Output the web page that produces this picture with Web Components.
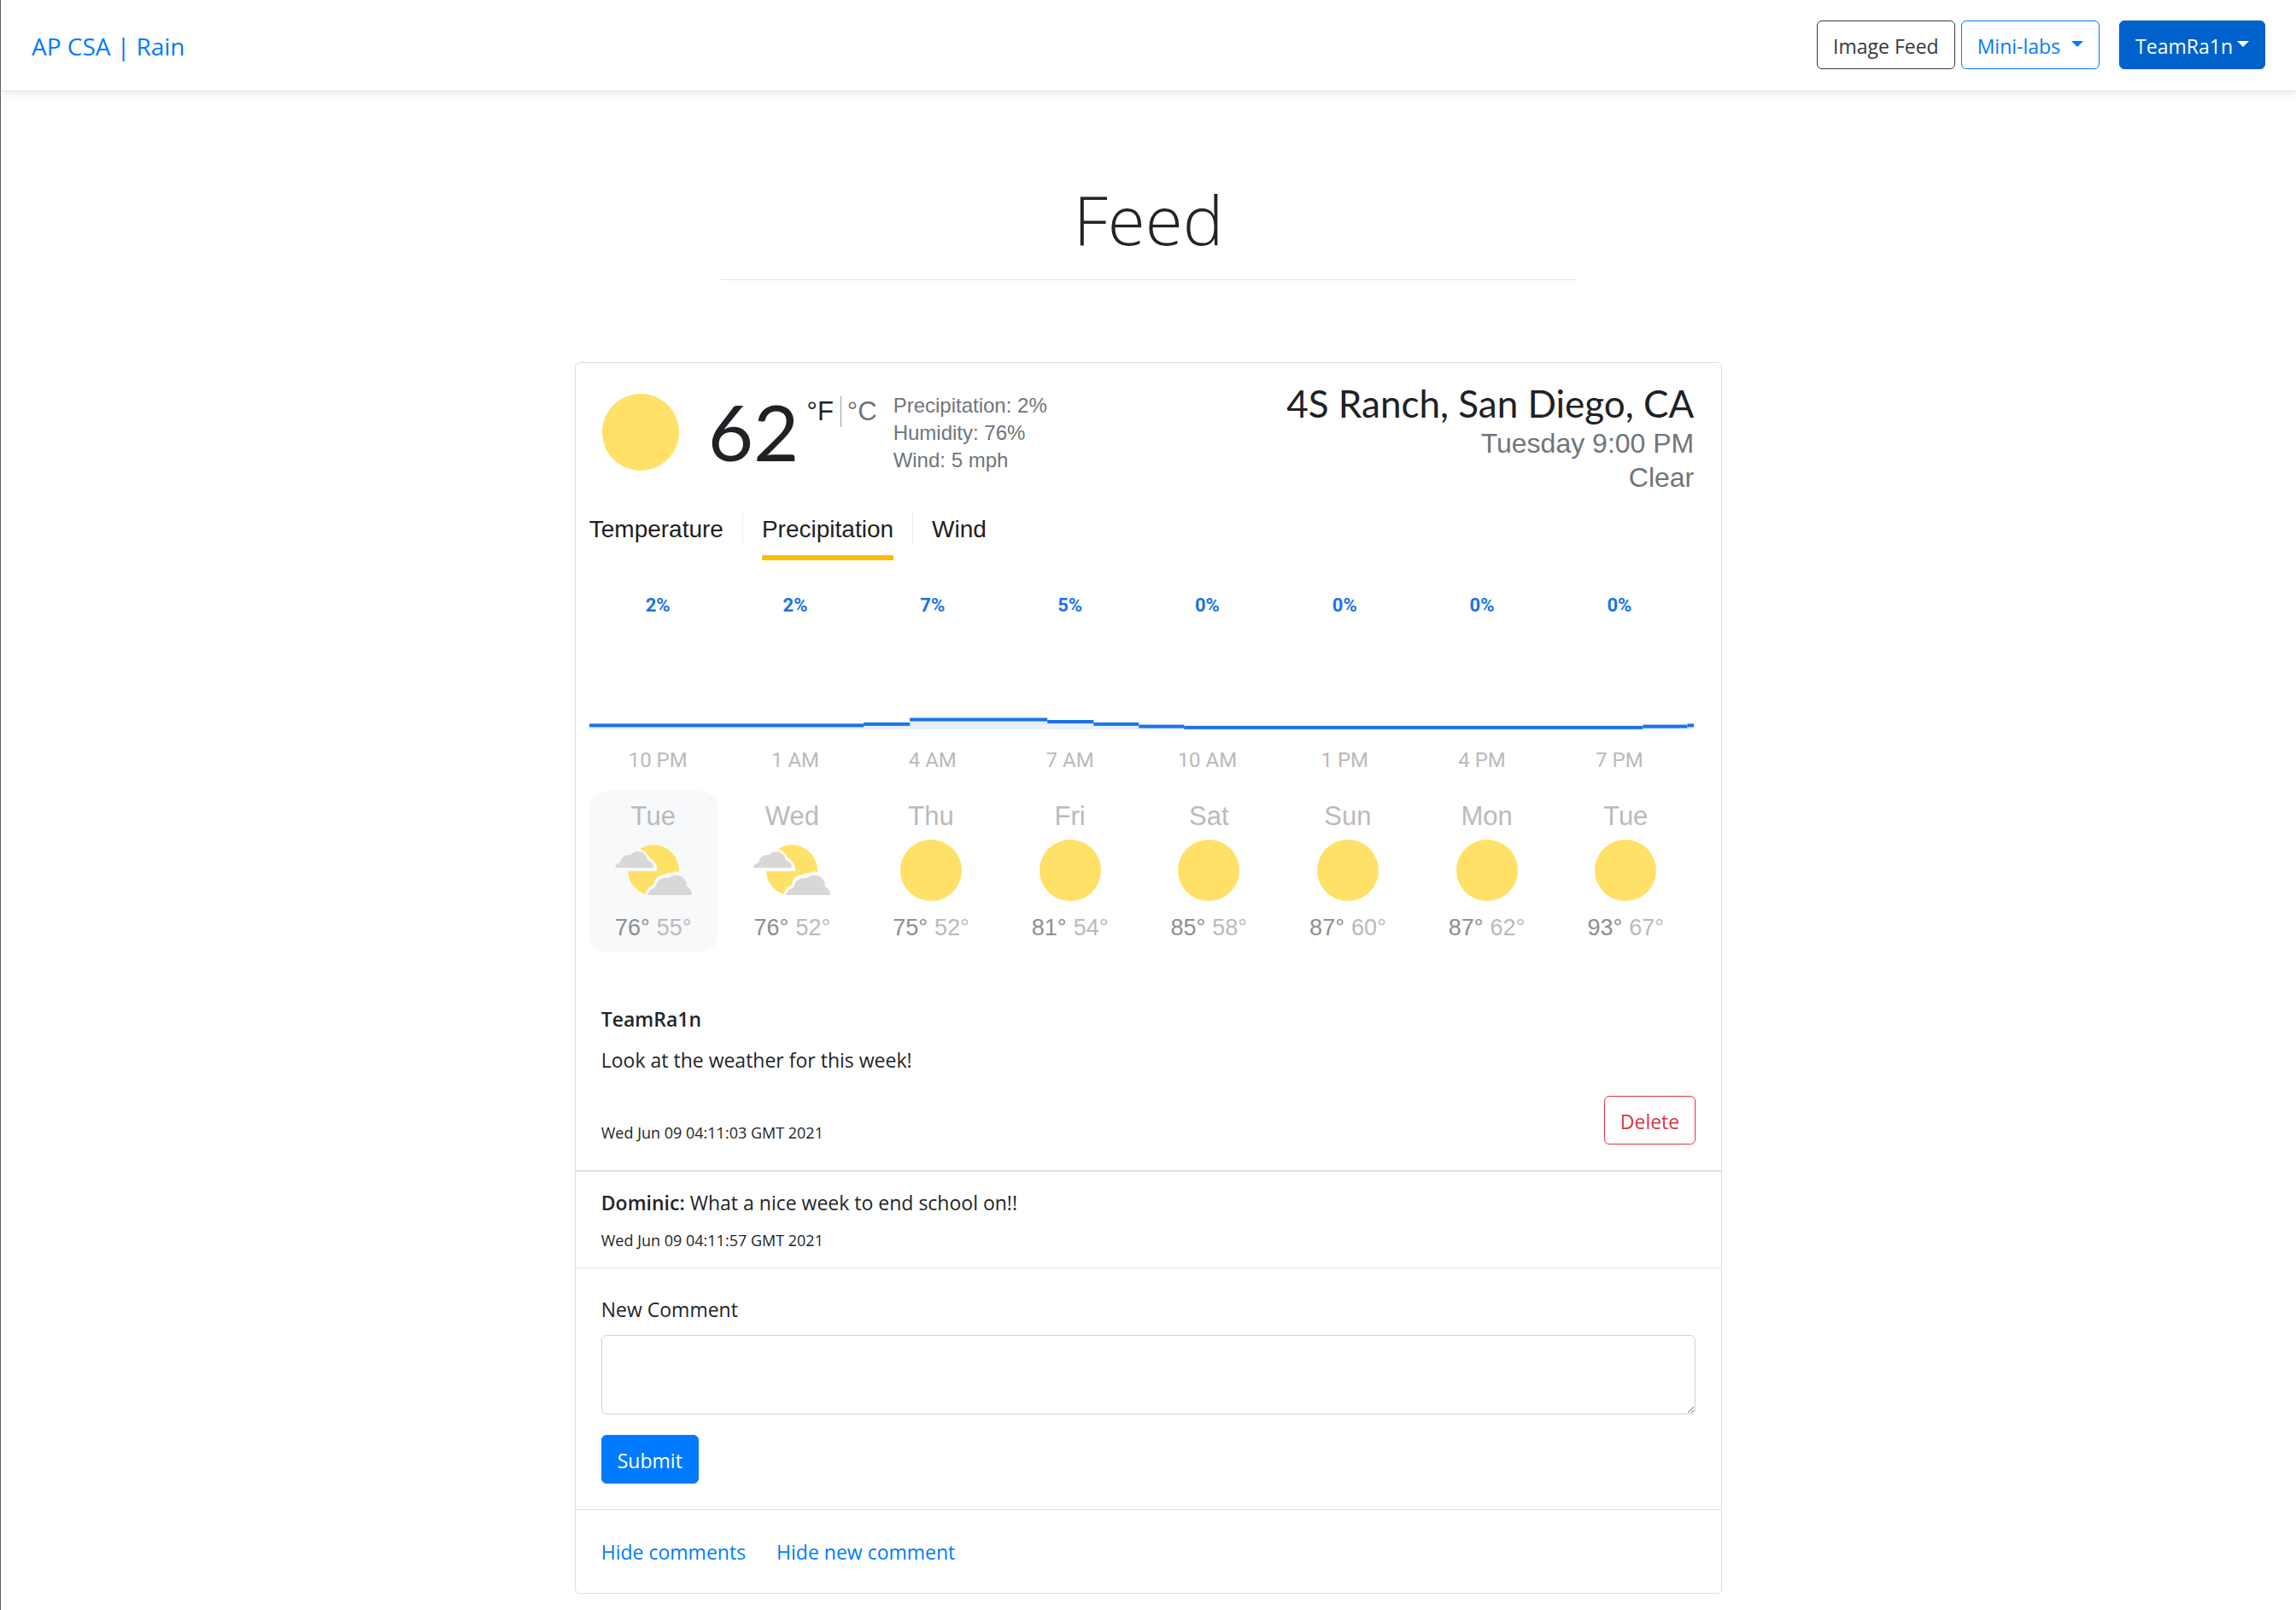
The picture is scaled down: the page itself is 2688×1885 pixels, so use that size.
<!DOCTYPE html>
<html lang="en">
<head>
<meta charset="utf-8">
<title>AP CSA | Rain</title>
<style>
  body {
    margin: 0;
    border-left: 1px solid #5f6164;
    min-height: 100vh;
    box-sizing: border-box;
    background: #fff;
    color: #212529;
    font: 400 23px/36px "Open Sans", "Noto Sans", sans-serif;
  }
  main { display: block; width: 50%; margin: 0 auto; }
</style>
</head>
<body>
<app-navbar brand="AP CSA | Rain">
  <app-button variant="dark">Image Feed</app-button>
  <app-button variant="outline" caret="wide">Mini-labs</app-button>
  <app-button variant="active" caret="tight" class="account">TeamRa1n</app-button>
</app-navbar>
<page-title>Feed</page-title>
<main>
  <post-card>
    <weather-widget slot="media"></weather-widget>
    <span slot="author">TeamRa1n</span>
    <span slot="text">Look at the weather for this week!</span>
    <span slot="date">Wed Jun 09 04:11:03 GMT 2021</span>
    <app-button slot="action" variant="danger">Delete</app-button>
    <post-comment slot="comments" author="Dominic:" date="Wed Jun 09 04:11:57 GMT 2021">What a nice week to end school on!!</post-comment>
    <comment-form slot="form"></comment-form>
    <app-link slot="links">Hide comments</app-link>
    <app-link slot="links">Hide new comment</app-link>
  </post-card>
</main>
<script>
class BaseElement extends HTMLElement {
  connectedCallback() {
    if (this.shadowRoot) return;
    this.attachShadow({ mode: 'open' }).innerHTML = this.render();
  }
}

customElements.define('app-navbar', class extends BaseElement {
  render() {
    return `<style>
      :host { display: block; }
      header { display: flex; align-items: center; justify-content: space-between; padding: 24px 36px 25px;
        border-bottom: 1px solid #dee2e6; box-shadow: 0 3px 9px rgba(0,0,0,.08); }
      a { padding-top: 2px; color: #007bff; text-decoration: none; font-size: 28px; line-height: 44px; }
      nav { display: flex; gap: 7px; }
      ::slotted(.account) { margin-left: 16px; }
    </style>
    <header><a href="#">${this.getAttribute('brand')}</a><nav><slot></slot></nav></header>`;
  }
});

customElements.define('app-button', class extends BaseElement {
  render() {
    return `<style>
      :host { display: block; }
      button { display: flex; align-items: center; height: 57px; padding: 2px 18px 0; margin: 0; box-sizing: border-box;
        font: inherit; line-height: 36px; border: 1px solid; border-radius: 6px; background: none; cursor: pointer; white-space: nowrap; }
      .dark { color: #343a40; }
      .outline { color: #007bff; }
      .danger { color: #dc3545; }
      .primary { color: #fff; background: #007bff; border-color: #007bff; }
      .active { color: #fff; background: #0062cc; border-color: #005cbf; }
      i { border: 7px solid transparent; border-top-color: currentColor; border-bottom: 0; margin-bottom: 4px; }
      .wide { margin-left: 13px; }
      .tight { margin-left: 5px; }
    </style>
    <button type="button" class="${this.getAttribute('variant')}"><slot></slot>${
      this.hasAttribute('caret') ? `<i class="${this.getAttribute('caret')}"></i>` : ''}</button>`;
  }
});

customElements.define('app-link', class extends BaseElement {
  render() {
    return `<style>:host { display: block; } a { color: #007bff; text-decoration: none; }</style><a href="#"><slot></slot></a>`;
  }
});

customElements.define('page-title', class extends BaseElement {
  render() {
    return `<style>
      :host { display: block; max-width: 1002px; margin: 98px auto 96px; border-bottom: 1px solid #e2e3e5; }
      h1 { margin: 0 0 21px; text-align: center; font-weight: 300; font-size: 80px; line-height: 101px; }
    </style><h1><slot></slot></h1>`;
  }
});

customElements.define('post-card', class extends BaseElement {
  render() {
    return `<style>
      :host { display: block; border: 1px solid #dfdfdf; border-radius: 6px; }
      .body { padding: 30px; border-bottom: 2px solid #dfdfdf; }
      h2 { margin: 0 0 15px; font-size: inherit; font-weight: 600; line-height: 29px; }
      p { margin: 0 0 24px; }
      .meta { display: flex; align-items: flex-end; justify-content: space-between; }
      .meta small { font-size: 18px; line-height: 28px; }
      .links { display: flex; gap: 36px; padding: 31px 30px 30px; }
    </style>
    <slot name="media"></slot>
    <section class="body">
      <h2><slot name="author"></slot></h2>
      <p><slot name="text"></slot></p>
      <div class="meta"><small><slot name="date"></slot></small><slot name="action"></slot></div>
    </section>
    <slot name="comments"></slot>
    <slot name="form"></slot>
    <div class="links"><slot name="links"></slot></div>`;
  }
});

customElements.define('post-comment', class extends BaseElement {
  render() {
    return `<style>
      :host { display: block; padding: 18px 30px; border-bottom: 1px solid #dee2e6; }
      p { margin: 0 0 12px; }
      b { font-weight: 600; }
      small { display: block; font-size: 18px; line-height: 28px; }
    </style>
    <p><b>${this.getAttribute('author')}</b> <slot></slot></p>
    <small>${this.getAttribute('date')}</small>`;
  }
});

customElements.define('comment-form', class extends BaseElement {
  render() {
    return `<style>
      :host { display: block; padding: 30px; border-bottom: 1px solid #dfdfdf; }
      form { display: flex; flex-direction: column; align-items: flex-start; }
      label { margin-bottom: 12px; }
      textarea { width: 100%; height: 93px; box-sizing: border-box; margin: 0 0 24px; padding: 9px 18px; font: inherit;
        border: 1px solid #ced4da; border-radius: 6px; resize: vertical; }
    </style>
    <form><label for="comment">New Comment</label><textarea id="comment"></textarea>
    <app-button variant="primary">Submit</app-button></form>`;
  }
});

const CLOUDY = `<svg width="90" height="72" viewBox="0 0 90 72" aria-hidden="true">
  <path fill="#ffe168" d="M29 11A30 30 0 0 1 75 38Q71 36 67 39Q61 38 58 41Q47 41 45 53Q38 56 35 64A30 30 0 0 1 15 37H49Q50 27 41 22Q37 14 29 11Z"/>
  <path fill="#d8d8d8" d="M0 33Q1 28 6 27Q8 17 18 18Q22 14 28 14Q36 15 38 24Q45 26 45 33Z"/>
  <path fill="#d8d8d8" d="M38 65Q40 58 47 56Q50 43 63 45Q67 41 74 42Q84 44 84 55Q90 58 90 65Z"/>
</svg>`;

customElements.define('weather-day', class extends BaseElement {
  render() {
    const get = name => this.getAttribute(name);
    return `<style>
      :host { display: flex; flex-direction: column; align-items: center; width: 150px; box-sizing: border-box;
        padding: 12px 0 13px; border-radius: 20px; color: #bababa; }
      :host([selected]) { background: #f8f9fb; }
      .name { font-size: 31px; line-height: 36px; margin-bottom: 9px; }
      .sun { width: 72px; height: 72px; border-radius: 50%; background: #ffe168; }
      .temps { display: flex; gap: 8px; margin-top: 15px; font-size: 27px; line-height: 32px; }
      .high { color: #8e8e8e; }
      svg { display: block; }
    </style>
    <span class="name">${get('day')}</span>
    ${get('sky') === 'cloudy' ? CLOUDY : '<div class="sun"></div>'}
    <div class="temps"><span class="high">${get('high')}°</span><span>${get('low')}°</span></div>`;
  }
});

customElements.define('weather-widget', class extends BaseElement {
  render() {
    const hours = [['2%', '10 PM'], ['2%', '1 AM'], ['7%', '4 AM'], ['5%', '7 AM'],
      ['0%', '10 AM'], ['0%', '1 PM'], ['0%', '4 PM'], ['0%', '7 PM']];
    const days = [['Tue', 'cloudy', 76, 55], ['Wed', 'cloudy', 76, 52], ['Thu', 'clear', 75, 52], ['Fri', 'clear', 81, 54],
      ['Sat', 'clear', 85, 58], ['Sun', 'clear', 87, 60], ['Mon', 'clear', 87, 62], ['Tue', 'clear', 93, 67]];
    // [x from, x to, y] of each level of the precipitation line
    const steps = [[0, 321, 127.3], [321, 375, 125.8], [375, 536, 120.5], [536, 590, 123], [590, 643, 125.8],
      [643, 696, 128.5], [696, 1233, 129.8], [1233, 1285, 128.5], [1285, 1293, 127.3]];
    return `<style>
      :host { display: block; padding: 20px 32px 34px 16px; font-family: "Liberation Sans", Arial, sans-serif; color: #202124; }
      .now { display: flex; justify-content: space-between; }
      .current { display: flex; align-items: flex-start; padding: 14px 0 0 15px; }
      .sun { width: 90px; height: 90px; margin: 2px 34px 0 0; border-radius: 50%; background: #ffe168; }
      .degrees { font: 400 92px/92px Lato, sans-serif; }
      .units { display: flex; margin: 5px 19px 0 9px; font-size: 31px; line-height: 36px; }
      .units button { border: 0; padding: 0 8px 0 0; margin: 0; background: none; font: inherit; color: inherit; }
      .units button + button { border-left: 1px solid #9aa0a6; padding: 0 0 0 7px; color: #70757a; }
      .details { color: #70757a; font-size: 24px; line-height: 32px; }
      .place { text-align: right; color: #70757a; font-size: 32px; line-height: 40px; }
      h2 { margin: 0; font: 400 44px/54px Lato, sans-serif; color: #202124; }
      .tabs { display: flex; align-items: flex-start; gap: 22px; margin-top: 21px; }
      .tabs button { border: 0; border-bottom: 6px solid transparent; padding: 2px 0 12px; margin: 0; background: none;
        font: inherit; font-size: 28px; line-height: 36px; color: #202124; }
      .tabs button.on { border-color: #fbbc04; }
      .tabs i { width: 1px; height: 36px; background: #ebebeb; }
      .row { display: grid; grid-template-columns: repeat(8, 1fr); margin-right: 7px; text-align: center; font-family: Roboto, sans-serif; }
      .percent { margin-top: 40px; font-size: 22px; line-height: 26px; font-weight: 700; color: #1a73e8; }
      .hour { margin-top: 21px; font-size: 24px; line-height: 30px; color: #bababa; }
      svg { display: block; width: 100%; height: 132px; }
      .days { display: flex; justify-content: space-between; margin: 21px 5px 0 0; }
    </style>
    <div class="now">
      <div class="current">
        <div class="sun"></div>
        <span class="degrees">62</span>
        <div class="units"><button type="button">°F</button><button type="button">°C</button></div>
        <div class="details"><div>Precipitation: 2%</div><div>Humidity: 76%</div><div>Wind: 5 mph</div></div>
      </div>
      <div class="place"><h2>4S Ranch, San Diego, CA</h2><div>Tuesday 9:00 PM</div><div>Clear</div></div>
    </div>
    <div class="tabs"><button type="button">Temperature</button><i></i><button type="button" class="on">Precipitation</button><i></i><button type="button">Wind</button></div>
    <div class="row percent">${hours.map(h => `<span>${h[0]}</span>`).join('')}</div>
    <svg viewBox="0 0 1293 132" preserveAspectRatio="none" aria-hidden="true">
      ${steps.map(([a, b, y]) => `<rect x="${a}" y="${y}" width="${b - a}" height="${132 - y}" fill="#e8f0fe"/>`).join('')}
      ${steps.map(([a, b, y]) => `<rect x="${a}" y="${y - 2}" width="${b - a}" height="4" fill="#1a73e8"/>`).join('')}
    </svg>
    <div class="row hour">${hours.map(h => `<span>${h[1]}</span>`).join('')}</div>
    <div class="days">${days.map(([d, s, h, l], i) =>
      `<weather-day day="${d}" sky="${s}" high="${h}" low="${l}"${i ? '' : ' selected'}></weather-day>`).join('')}</div>`;
  }
});
</script>
</body>
</html>
